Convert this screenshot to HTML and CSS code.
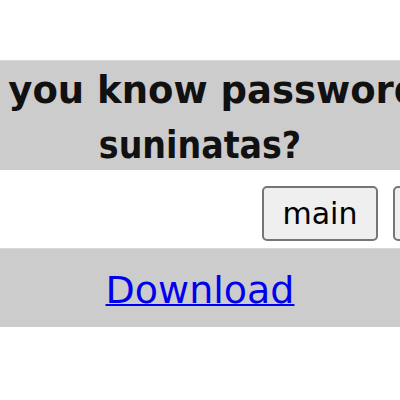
FILE: index.html
```html
<!DOCTYPE html>
<html>
<head>
<meta charset="utf-8">
<link rel="stylesheet" href="styles.css">
</head>
<body>
<div class="page">
  <div class="row title"><span class="line1">Do you know password of</span><br><span class="line2">suninatas?</span></div>
  <div class="row buttons">
    <button class="btn">main</button>
    <button class="btn">back</button>
  </div>
  <div class="row link"><a href="#">Download</a></div>
</div>
</body>
</html>
```
FILE: styles.css
```css
html, body {
  margin: 0;
  padding: 0;
  background: #ffffff;
  overflow: hidden;
}
.page {
  width: 600px;
  margin-left: -100px;
  padding-top: 60px;
  display: flex;
  flex-direction: column;
}
.row {
  box-sizing: border-box;
}
.title {
  background: #cccccc;
  border-top: 1px solid #dadada;
  height: 110px;
  padding-top: 2px;
  text-align: center;
  font-family: "DejaVu Sans", sans-serif;
  font-weight: bold;
  font-size: 37px;
  line-height: 55px;
  color: #111;
  white-space: nowrap;
}
.line1 {
  display: inline-block;
  margin-left: 14px;
}
.line2 {
  font-family: "DejaVu Sans Condensed", "DejaVu Sans", sans-serif;
  font-stretch: condensed;
}
.buttons {
  height: 78px;
  display: flex;
  align-items: center;
  gap: 15px;
  padding-left: 362px;
  padding-top: 8px;
  white-space: nowrap;
}
.btn {
  flex: none;
  width: 116px;
  height: 55px;
  box-sizing: border-box;
  background: #efefef;
  border: 2px solid #767676;
  border-radius: 5px;
  font-family: "DejaVu Sans", sans-serif;
  font-size: 30px;
  color: #000;
  padding: 0;
}
.link {
  background: #cccccc;
  border-top: 1px solid #dadada;
  height: 79px;
  padding-top: 4px;
  text-align: center;
  font-family: "DejaVu Sans", sans-serif;
  font-size: 38px;
  line-height: 75px;
}
.link a {
  color: #0000ee;
  text-decoration: underline;
  text-decoration-thickness: 2px;
}
```
